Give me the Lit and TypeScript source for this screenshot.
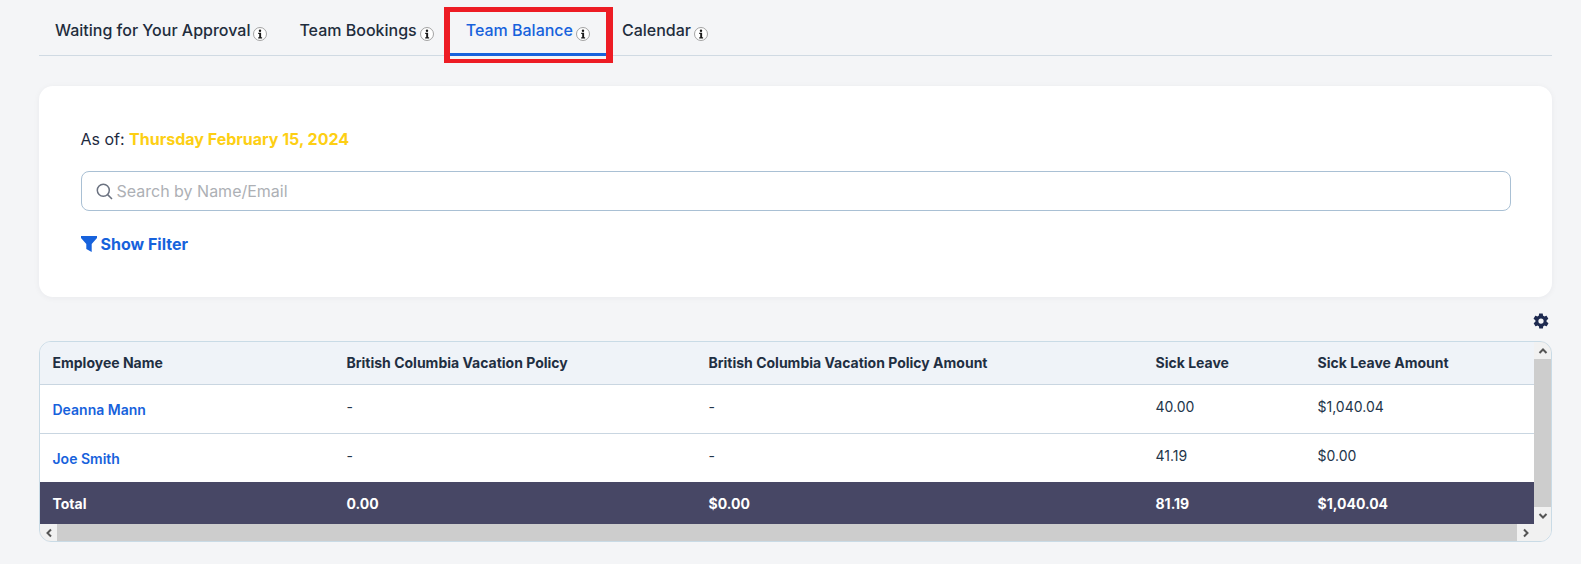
import { LitElement, html, css, svg } from "lit";
import { customElement } from "lit/decorators.js";

const info = html`<svg class="info" viewBox="0 0 14 14" width="14" height="14" aria-hidden="true">
  <circle cx="7" cy="7" r="6.5" fill="#fff" stroke="#999" stroke-width="0.9"></circle>
  <circle cx="7" cy="3.7" r="1.2" fill="#1a1a1a"></circle>
  <path d="M5.2 5.7h2.9v4.6h1v1.2H5.2v-1.2h1v-3.4h-1z" fill="#1a1a1a"></path>
</svg>`;

const chev = (d: string) => svg`<svg viewBox="0 0 10 10" width="10" height="10"><path d="${d}" fill="none" stroke="#555" stroke-width="2"></path></svg>`;

const cols = [294, 362, 447, 162, 229];
const rows = [
  ["Deanna Mann", "-", "-", "40.00", "$1,040.04"],
  ["Joe Smith", "-", "-", "41.19", "$0.00"],
];

@customElement("app-root")
export class AppRoot extends LitElement {
  static styles = css`
    :host {
      display: block;
      min-height: 564px;
      background: #f4f5f7;
      font-family: Inter, "Liberation Sans", sans-serif;
      color: #1e2a3f;
      padding: 0 29px 0 39px;
      box-sizing: border-box;
    }
    .tabs {
      display: flex;
      height: 56px;
      border-bottom: 1px solid #d0dae3;
      box-sizing: border-box;
    }
    .tab {
      position: relative;
      display: flex;
      align-items: center;
      gap: 3px;
      padding: 3px 16px 0;
      height: 56px;
      box-sizing: border-box;
      font-size: 16px;
      font-weight: 500;
      color: #1f2d3d;
    }
    .tab.active {
      color: #1762dc;
      border-bottom: 3px solid #1762dc;
      padding-top: 6px;
    }
    .info { margin-top: 8px; flex: none; }
    .mark {
      position: absolute;
      left: -6px;
      right: -7px;
      top: 7px;
      bottom: -10px;
      border-style: solid;
      border-color: #ed1c24;
      border-width: 5px 7px 4px 6px;
    }
    .card {
      margin-top: 30px;
      height: 211px;
      background: #fff;
      border-radius: 14px;
      box-shadow: 0 1px 6px rgba(30, 42, 63, 0.05);
      padding: 43px 41px 0 41.5px;
      box-sizing: border-box;
    }
    .asof { font-size: 16px; line-height: 20px; }
    .asof b { color: #fdcf14; font-weight: 700; }
    .search {
      margin-top: 22px;
      height: 40px;
      border: 1px solid #a9c0d4;
      border-radius: 8px;
      display: flex;
      align-items: center;
      gap: 4px;
      padding-left: 14px;
      box-sizing: border-box;
      font-size: 16px;
      color: #adb0b5;
    }
    .filter {
      margin-top: 23px;
      display: flex;
      align-items: center;
      gap: 4px;
      color: #1762dc;
      font-size: 16px;
      font-weight: 700;
      line-height: 20px;
    }
    .tools {
      display: flex;
      justify-content: flex-end;
      align-items: center;
      height: 44px;
      padding: 3px 2.5px 0 0;
      box-sizing: border-box;
    }
    .grid {
      display: grid;
      grid-template-columns: 1494px 17px;
      grid-template-rows: 182px 17px;
      width: 1513px;
      height: 201px;
      border: 1px solid #c9dbe6;
      border-radius: 12px;
      overflow: hidden;
      box-sizing: border-box;
    }
    table {
      border-collapse: collapse;
      table-layout: fixed;
      width: 1494px;
      height: 182px;
      font-size: 14px;
    }
    th, td { padding: 0 0 0 12.5px; text-align: left; box-sizing: border-box; }
    th { font-weight: 700; background: #eff3f8; color: #1f2f42; height: 42px; border-bottom: 1px solid #c9d6e1; }
    tbody td { height: 49px; background: #fff; color: #23354a; border-bottom: 1px solid #c9d6e1; padding-bottom: 5px; }
    tbody tr:last-child td { border-bottom: 0; }
    tbody td.name { color: #1762dc; font-weight: 600; padding-bottom: 0; padding-top: 2px; }
    tfoot td { background: #474765; color: #fff; font-weight: 700; height: 42px; }
    .vbar { display: flex; flex-direction: column; background: #cdcdcd; }
    .hbar { display: flex; background: #cdcdcd; justify-content: space-between; }
    .fill { flex: 1; }
    .btn { background: #f1f1f1; display: flex; align-items: center; justify-content: center; flex: none; width: 17px; height: 17px; }
    .corner { background: #f1f1f1; }
  `;

  render() {
    return html`
      <nav class="tabs">
        <div class="tab">Waiting for Your Approval ${info}</div>
        <div class="tab">Team Bookings ${info}</div>
        <div class="tab active">Team Balance ${info}<span class="mark"></span></div>
        <div class="tab">Calendar ${info}</div>
      </nav>
      <section class="card">
        <div class="asof">As of: <b>Thursday February 15, 2024</b></div>
        <div class="search">
          <svg width="17" height="17" viewBox="0 0 17 17" fill="none" stroke="#6b7280" stroke-width="1.5">
            <circle cx="7.3" cy="7.3" r="6"></circle><path d="M11.6 11.6l4.4 4.4"></path>
          </svg>
          <span>Search by Name/Email</span>
        </div>
        <div class="filter">
          <svg width="16" height="16" viewBox="0 0 16 16"><path d="M0 0h16v2l-5.3 6v8L5.3 13V8L0 2z" fill="#1762dc"></path></svg>
          <span>Show Filter</span>
        </div>
      </section>
      <div class="tools">
        <svg width="18" height="18" viewBox="0 0 24 24"><path fill="#1e2a50" fill-rule="evenodd" d="M19.4 13c.1-.3.1-.7.1-1s0-.7-.1-1l2.1-1.6c.2-.2.2-.4.1-.6l-2-3.5c-.1-.2-.4-.3-.6-.2l-2.5 1c-.5-.4-1.1-.7-1.7-1l-.4-2.6c0-.3-.2-.5-.5-.5h-4c-.3 0-.5.2-.5.5l-.4 2.6c-.6.3-1.2.6-1.7 1l-2.5-1c-.2-.1-.5 0-.6.2l-2 3.5c-.1.2-.1.5.1.6L4.6 11c-.1.3-.1.7-.1 1s0 .7.1 1l-2.1 1.6c-.2.2-.2.4-.1.6l2 3.5c.1.2.4.3.6.2l2.5-1c.5.4 1.1.7 1.7 1l.4 2.6c0 .3.2.5.5.5h4c.3 0 .5-.2.5-.5l.4-2.6c.6-.3 1.2-.6 1.7-1l2.5 1c.2.1.5 0 .6-.2l2-3.5c.1-.2.1-.5-.1-.6zM12 15.5a3.5 3.5 0 1 1 0-7 3.5 3.5 0 0 1 0 7z"></path></svg>
      </div>
      <div class="grid">
        <table>
          <colgroup>${cols.map((w) => html`<col style="width:${w}px" />`)}</colgroup>
          <thead>
            <tr>
              <th>Employee Name</th>
              <th>British Columbia Vacation Policy</th>
              <th>British Columbia Vacation Policy Amount</th>
              <th>Sick Leave</th>
              <th>Sick Leave Amount</th>
            </tr>
          </thead>
          <tbody>
            ${rows.map(
              (r) => html`<tr>
                <td class="name">${r[0]}</td>
                <td>${r[1]}</td>
                <td>${r[2]}</td>
                <td>${r[3]}</td>
                <td>${r[4]}</td>
              </tr>`
            )}
          </tbody>
          <tfoot>
            <tr>
              <td>Total</td>
              <td>0.00</td>
              <td>$0.00</td>
              <td>81.19</td>
              <td>$1,040.04</td>
            </tr>
          </tfoot>
        </table>
        <div class="vbar">
          <div class="btn">${chev("M1.5 7 5 3.5 8.5 7")}</div>
          <div class="fill"></div>
          <div class="btn">${chev("M1.5 3 5 6.5 8.5 3")}</div>
        </div>
        <div class="hbar">
          <div class="btn">${chev("M7 1.5 3.5 5 7 8.5")}</div>
          <div class="btn">${chev("M3 1.5 6.5 5 3 8.5")}</div>
        </div>
        <div class="corner"></div>
      </div>
    `;
  }
}
